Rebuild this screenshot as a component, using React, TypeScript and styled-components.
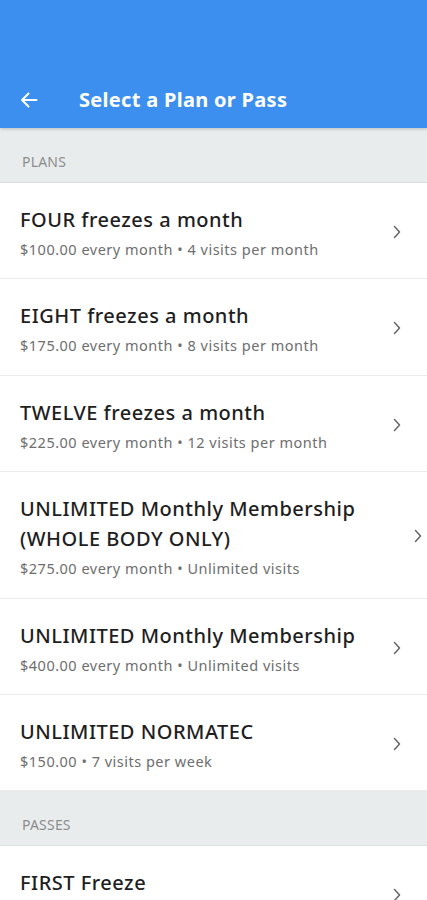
import * as React from "react";
import styled, { createGlobalStyle } from "styled-components";

const GlobalStyle = createGlobalStyle`
  body {
    margin: 0;
    background: #ffffff;
    font-family: "Noto Sans", Lato, sans-serif;
  }
`;

interface IOffer {
  title: string;
  detail: string;
  wide?: boolean;
}

const plans: IOffer[] = [
  { title: "FOUR freezes a month", detail: "$100.00 every month • 4 visits per month" },
  { title: "EIGHT freezes a month", detail: "$175.00 every month • 8 visits per month" },
  { title: "TWELVE freezes a month", detail: "$225.00 every month • 12 visits per month" },
  {
    title: "UNLIMITED Monthly Membership (WHOLE BODY ONLY)",
    detail: "$275.00 every month • Unlimited visits",
    wide: true,
  },
  { title: "UNLIMITED Monthly Membership", detail: "$400.00 every month • Unlimited visits" },
  { title: "UNLIMITED NORMATEC", detail: "$150.00 • 7 visits per week" },
];

// the pass detail line sits below the fold in the screenshot
const passes: IOffer[] = [{ title: "FIRST Freeze", detail: "" }];

const Chevron = () => (
  <svg width="8" height="14" viewBox="0 0 8 14" fill="none">
    <path d="M1.5 1.5 L6.5 7 L1.5 12.5" stroke="#666" strokeWidth="1.5" strokeLinecap="round" strokeLinejoin="round" />
  </svg>
);

const BackArrow = () => (
  <svg width="18" height="18" viewBox="0 0 18 18" fill="none">
    <path d="M16.5 9 H2 M8.5 2.5 L2 9 L8.5 15.5" stroke="#fff" strokeWidth="2" strokeLinecap="round" strokeLinejoin="round" />
  </svg>
);

const OfferRow: React.FC<{ offer: IOffer }> = ({ offer }) => (
  <Row $wide={offer.wide}>
    <RowText>
      <Title>{offer.title}</Title>
      <Detail>{offer.detail}</Detail>
    </RowText>
    <Chevron />
  </Row>
);

export default function App() {
  return (
    <Page>
      <GlobalStyle />
      <Header>
        <BackButton>
          <BackArrow />
        </BackButton>
        <HeaderTitle>Select a Plan or Pass</HeaderTitle>
      </Header>
      <Section>PLANS</Section>
      {plans.map((p) => (
        <OfferRow key={p.title} offer={p} />
      ))}
      <Section>PASSES</Section>
      {passes.map((p) => (
        <OfferRow key={p.title} offer={p} />
      ))}
    </Page>
  );
}

const Page = styled.div`
  width: 427px;
  height: 900px;
  overflow: hidden;
  background: #fff;
`;

const Header = styled.header`
  height: 128px;
  background: #3c8fee;
  display: flex;
  align-items: flex-end;
  padding-bottom: 14px;
  box-sizing: border-box;
  box-shadow: 0 1px 3px rgba(0, 0, 0, 0.2);
  position: relative;
  z-index: 1;
`;

const BackButton = styled.div`
  width: 79px;
  padding-left: 20px;
  box-sizing: border-box;
  display: flex;
  align-items: center;
  height: 28px;
`;

const HeaderTitle = styled.h1`
  margin: 0;
  color: #fff;
  font-size: 20px;
  font-weight: 700;
  letter-spacing: 0.3px;
  line-height: 28px;
`;

const Section = styled.div`
  background: #e9ecec;
  color: #8c8c8c;
  font-size: 14px;
  letter-spacing: 0.2px;
  line-height: 16px;
  height: 55px;
  box-sizing: border-box;
  padding: 26px 22px 0;
  border-bottom: 1px solid #dcdfdf;
`;

const Row = styled.div<{ $wide?: boolean }>`
  display: flex;
  align-items: center;
  padding: 22px ${(p) => (p.$wide ? "5px" : "26px")} 19.4px 20px;
  border-bottom: 1px solid #ececec;
  gap: 12px;
`;

const RowText = styled.div`
  flex: 1;
  min-width: 0;
`;

const Title = styled.div`
  font-size: 20px;
  letter-spacing: 0.5px;
  line-height: 30px;
  color: #1e1e1e;
  font-weight: 500;
`;

const Detail = styled.div`
  margin-top: 4px;
  font-size: 14.5px;
  letter-spacing: 0.5px;
  line-height: 20px;
  height: 20px;
  color: #6e6e6e;
`;
